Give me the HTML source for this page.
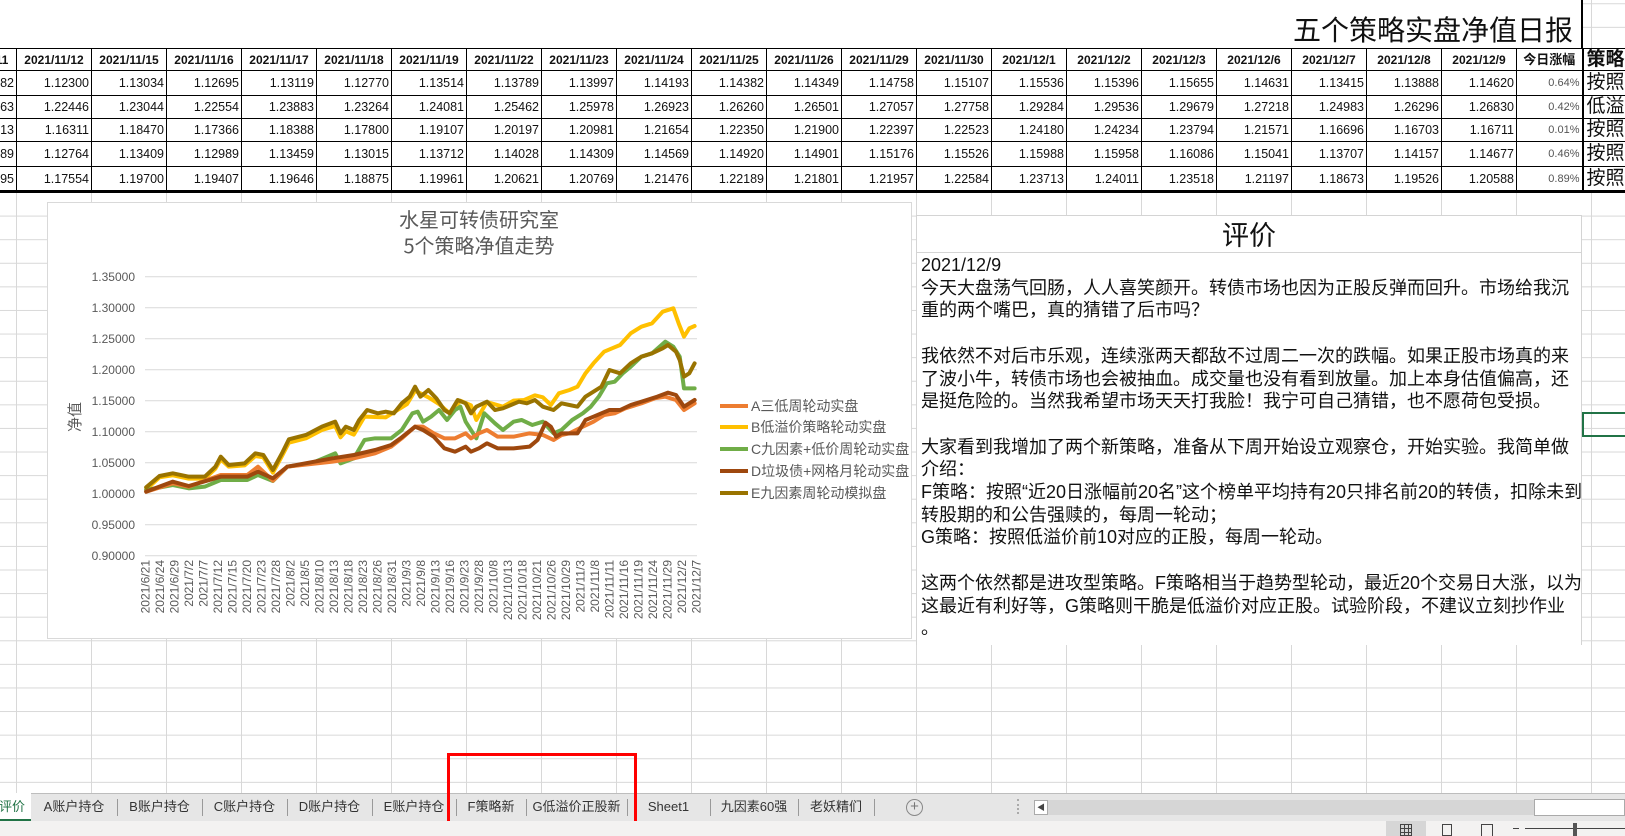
<!DOCTYPE html>
<html><head><meta charset="utf-8">
<style>
*{margin:0;padding:0;box-sizing:border-box}
html,body{width:1625px;height:836px;overflow:hidden;background:#fff;font-family:"Liberation Sans","Noto Sans CJK SC",sans-serif}
#grid{position:absolute;left:0;top:0;width:1625px;height:793px;
background-image:linear-gradient(to right,#d8d8d8 1px,transparent 1px),linear-gradient(to bottom,#d8d8d8 1px,transparent 1px);
background-size:75px 23.6px;background-position:16px 192px}
.abs{position:absolute}
table{border-collapse:collapse;position:absolute;left:-59px;top:48px;table-layout:fixed;width:1701px;background:#fff}
td{border:1px solid #000;font-size:12.5px;line-height:14px;text-align:right;padding:0 2px;white-space:nowrap;overflow:hidden;color:#111;vertical-align:middle}
tr.h td{font-weight:bold;font-size:12px;text-align:center}
td.p{font-size:11px;color:#555}
td.s{font-size:19px;line-height:18px;text-align:left;padding-left:3px;border-left:2px solid #000;color:#111}
.tab{position:absolute;top:793px;height:28px;line-height:27px;font-size:13px;color:#333;text-align:center}
.sep{position:absolute;top:799px;width:1px;height:17px;background:#999}
</style></head><body>
<div id="grid"></div>
<div class="abs" style="left:0;top:0;width:1582px;height:48px;background:#fff"></div>
<div class="abs" style="right:52px;top:12px;font-size:28px;color:#111;font-family:'Noto Sans CJK SC',sans-serif;line-height:34px">五个策略实盘净值日报</div>
<div class="abs" style="left:1581px;top:0;width:2px;height:48px;background:#000"></div>
<table>
<colgroup><col style="width:75px"><col span="20" style="width:75px"><col style="width:66px"><col style="width:60px"></colgroup>
<tr class="h" style="height:22px"><td>2021/11/11</td><td>2021/11/12</td><td>2021/11/15</td><td>2021/11/16</td><td>2021/11/17</td><td>2021/11/18</td><td>2021/11/19</td><td>2021/11/22</td><td>2021/11/23</td><td>2021/11/24</td><td>2021/11/25</td><td>2021/11/26</td><td>2021/11/29</td><td>2021/11/30</td><td>2021/12/1</td><td>2021/12/2</td><td>2021/12/3</td><td>2021/12/6</td><td>2021/12/7</td><td>2021/12/8</td><td>2021/12/9</td><td style="font-size:13px">今日涨幅</td><td class="s" style="font-weight:bold;font-size:19px;text-align:left">策略</td></tr>
<tr style="height:25px"><td>1.12182</td><td>1.12300</td><td>1.13034</td><td>1.12695</td><td>1.13119</td><td>1.12770</td><td>1.13514</td><td>1.13789</td><td>1.13997</td><td>1.14193</td><td>1.14382</td><td>1.14349</td><td>1.14758</td><td>1.15107</td><td>1.15536</td><td>1.15396</td><td>1.15655</td><td>1.14631</td><td>1.13415</td><td>1.13888</td><td>1.14620</td><td class="p">0.64%</td><td class="s">按照"</td></tr>
<tr style="height:23px"><td>1.22063</td><td>1.22446</td><td>1.23044</td><td>1.22554</td><td>1.23883</td><td>1.23264</td><td>1.24081</td><td>1.25462</td><td>1.25978</td><td>1.26923</td><td>1.26260</td><td>1.26501</td><td>1.27057</td><td>1.27758</td><td>1.29284</td><td>1.29536</td><td>1.29679</td><td>1.27218</td><td>1.24983</td><td>1.26296</td><td>1.26830</td><td class="p">0.42%</td><td class="s">低溢"</td></tr>
<tr style="height:23px"><td>1.16213</td><td>1.16311</td><td>1.18470</td><td>1.17366</td><td>1.18388</td><td>1.17800</td><td>1.19107</td><td>1.20197</td><td>1.20981</td><td>1.21654</td><td>1.22350</td><td>1.21900</td><td>1.22397</td><td>1.22523</td><td>1.24180</td><td>1.24234</td><td>1.23794</td><td>1.21571</td><td>1.16696</td><td>1.16703</td><td>1.16711</td><td class="p">0.01%</td><td class="s">按照,</td></tr>
<tr style="height:25px"><td>1.12689</td><td>1.12764</td><td>1.13409</td><td>1.12989</td><td>1.13459</td><td>1.13015</td><td>1.13712</td><td>1.14028</td><td>1.14309</td><td>1.14569</td><td>1.14920</td><td>1.14901</td><td>1.15176</td><td>1.15526</td><td>1.15988</td><td>1.15958</td><td>1.16086</td><td>1.15041</td><td>1.13707</td><td>1.14157</td><td>1.14677</td><td class="p">0.46%</td><td class="s">按照"</td></tr>
<tr style="height:25px;border-bottom:3px solid #000"><td>1.17495</td><td>1.17554</td><td>1.19700</td><td>1.19407</td><td>1.19646</td><td>1.18875</td><td>1.19961</td><td>1.20621</td><td>1.20769</td><td>1.21476</td><td>1.22189</td><td>1.21801</td><td>1.21957</td><td>1.22584</td><td>1.23713</td><td>1.24011</td><td>1.23518</td><td>1.21197</td><td>1.18673</td><td>1.19526</td><td>1.20588</td><td class="p">0.89%</td><td class="s">按照"</td></tr>
</table>

<!-- chart -->
<div class="abs" style="left:47px;top:202px;width:865px;height:437px;background:#fff;border:1px solid #d9d9d9"></div>
<svg class="abs" style="left:0;top:0" width="1625" height="836" font-family="Liberation Sans, Noto Sans CJK SC, sans-serif">
<g stroke="#d9d9d9" stroke-width="1">
<line x1="145" x2="697" y1="276.7" y2="276.7"/><line x1="145" x2="697" y1="307.7" y2="307.7"/><line x1="145" x2="697" y1="338.7" y2="338.7"/><line x1="145" x2="697" y1="369.7" y2="369.7"/><line x1="145" x2="697" y1="400.7" y2="400.7"/><line x1="145" x2="697" y1="431.7" y2="431.7"/><line x1="145" x2="697" y1="462.7" y2="462.7"/><line x1="145" x2="697" y1="493.7" y2="493.7"/><line x1="145" x2="697" y1="524.7" y2="524.7"/><line x1="145" x2="697" y1="555.7" y2="555.7"/>
</g>
<g fill="#595959" font-size="12" text-anchor="end">
<text x="135" y="281">1.35000</text><text x="135" y="312">1.30000</text><text x="135" y="343">1.25000</text><text x="135" y="374">1.20000</text><text x="135" y="405">1.15000</text><text x="135" y="436">1.10000</text><text x="135" y="467">1.05000</text><text x="135" y="498">1.00000</text><text x="135" y="529">0.95000</text><text x="135" y="560">0.90000</text>
</g>
<text x="479" y="227" fill="#595959" font-size="20" text-anchor="middle" font-family="Noto Sans CJK SC, sans-serif">水星可转债研究室</text>
<text x="479" y="253" fill="#595959" font-size="20" text-anchor="middle" font-family="Noto Sans CJK SC, sans-serif">5个策略净值走势</text>
<text transform="translate(80 417) rotate(-90)" fill="#595959" font-size="15" text-anchor="middle" font-family="Noto Sans CJK SC, sans-serif">净值</text>
<g transform="translate(45 200) scale(0.53248 0.33333)" fill="none" stroke-width="4" stroke-linejoin="round" stroke-linecap="round">
<polyline vector-effect="non-scaling-stroke" stroke="#FFC000" points="190,868 215,832 240,826 270,836 300,836 320,806 330,778 345,800 375,796 395,768 410,772 428,818 445,768 458,728 490,715 520,690 545,678 555,712 565,694 580,704 600,650 640,652 680,612 695,572 720,592 740,612 760,640 780,602 800,616 810,660 830,606 860,620 880,602 900,600 920,586 935,592 950,615 965,580 985,570 1000,560 1015,520 1030,490 1050,455 1065,445 1080,435 1100,400 1120,380 1140,370 1160,335 1180,325 1190,370 1200,410 1210,385 1220,378"/>
<polyline vector-effect="non-scaling-stroke" stroke="#70AD47" points="190,870 240,855 270,865 300,860 330,840 380,840 400,825 428,843 455,800 500,790 530,770 545,760 555,790 580,775 600,720 620,715 650,715 670,690 690,640 700,635 710,665 725,650 740,630 755,660 770,630 780,620 790,665 810,715 825,640 845,670 860,690 880,665 895,660 915,675 935,665 955,700 970,690 990,660 1010,640 1025,620 1040,590 1055,550 1070,545 1085,520 1100,500 1120,470 1140,460 1165,425 1180,440 1192,470 1200,565 1210,565 1220,565"/>
<polyline vector-effect="non-scaling-stroke" stroke="#ED7D31" points="190,875 240,850 270,860 330,825 380,825 400,800 428,842 455,800 540,785 580,775 620,760 650,740 670,715 695,680 710,680 730,700 750,715 770,715 790,700 800,715 815,700 830,690 850,710 880,710 910,700 935,705 955,720 970,705 985,700 1010,680 1030,665 1050,645 1070,640 1090,625 1120,610 1145,595 1165,590 1185,600 1200,630 1220,610"/>
<polyline vector-effect="non-scaling-stroke" stroke="#9E480E" points="190,875 240,845 270,858 330,830 380,830 400,815 428,835 455,800 540,775 580,765 620,750 650,735 670,712 695,680 710,690 730,710 750,745 770,755 790,740 800,755 815,745 830,730 850,745 880,745 910,740 925,720 940,668 950,680 960,710 970,700 985,700 1000,700 1015,660 1030,650 1045,640 1060,630 1080,630 1100,615 1130,600 1150,590 1170,578 1185,585 1200,620 1220,600"/>
<polyline vector-effect="non-scaling-stroke" stroke="#997300" points="190,862 215,828 240,820 270,830 300,830 320,800 330,770 345,795 375,790 395,760 410,765 428,810 445,760 458,718 490,705 520,680 545,665 555,700 565,680 580,690 590,660 605,630 625,640 640,635 655,640 670,610 685,590 695,560 705,590 720,570 735,595 750,630 760,640 775,600 790,610 800,640 810,620 830,605 845,630 860,625 875,615 890,605 905,610 920,600 935,620 955,630 970,610 985,615 1000,620 1015,590 1030,575 1045,560 1060,510 1080,520 1100,490 1120,470 1140,460 1160,445 1170,435 1185,455 1192,480 1200,530 1210,520 1220,490"/>
</g>
<g stroke-width="4">
<line x1="720" x2="748" y1="406" y2="406" stroke="#ED7D31"/><line x1="720" x2="748" y1="427" y2="427" stroke="#FFC000"/><line x1="720" x2="748" y1="449" y2="449" stroke="#70AD47"/><line x1="720" x2="748" y1="471" y2="471" stroke="#9E480E"/><line x1="720" x2="748" y1="493" y2="493" stroke="#997300"/>
</g>
<g fill="#595959" font-size="14">
<text x="751" y="411">A三低周轮动实盘</text><text x="751" y="432">B低溢价策略轮动实盘</text><text x="751" y="454">C九因素+低价周轮动实盘</text><text x="751" y="476">D垃圾债+网格月轮动实盘</text><text x="751" y="498">E九因素周轮动模拟盘</text>
</g>
<g fill="#595959" font-size="12" text-anchor="end">
<text transform="translate(149.5 560) rotate(-90)">2021/6/21</text><text transform="translate(164 560) rotate(-90)">2021/6/24</text><text transform="translate(178.5 560) rotate(-90)">2021/6/29</text><text transform="translate(193 560) rotate(-90)">2021/7/2</text><text transform="translate(207.5 560) rotate(-90)">2021/7/7</text><text transform="translate(222 560) rotate(-90)">2021/7/12</text><text transform="translate(236.5 560) rotate(-90)">2021/7/15</text><text transform="translate(251 560) rotate(-90)">2021/7/20</text><text transform="translate(265.5 560) rotate(-90)">2021/7/23</text><text transform="translate(280 560) rotate(-90)">2021/7/28</text><text transform="translate(294.5 560) rotate(-90)">2021/8/2</text><text transform="translate(309 560) rotate(-90)">2021/8/5</text><text transform="translate(323.5 560) rotate(-90)">2021/8/10</text><text transform="translate(338 560) rotate(-90)">2021/8/13</text><text transform="translate(352.5 560) rotate(-90)">2021/8/18</text><text transform="translate(367 560) rotate(-90)">2021/8/23</text><text transform="translate(381.5 560) rotate(-90)">2021/8/26</text><text transform="translate(396 560) rotate(-90)">2021/8/31</text><text transform="translate(410.5 560) rotate(-90)">2021/9/3</text><text transform="translate(425 560) rotate(-90)">2021/9/8</text><text transform="translate(439.5 560) rotate(-90)">2021/9/13</text><text transform="translate(454 560) rotate(-90)">2021/9/16</text><text transform="translate(468.5 560) rotate(-90)">2021/9/23</text><text transform="translate(483 560) rotate(-90)">2021/9/28</text><text transform="translate(497.5 560) rotate(-90)">2021/10/8</text><text transform="translate(512 560) rotate(-90)">2021/10/13</text><text transform="translate(526.5 560) rotate(-90)">2021/10/18</text><text transform="translate(541 560) rotate(-90)">2021/10/21</text><text transform="translate(555.5 560) rotate(-90)">2021/10/26</text><text transform="translate(570 560) rotate(-90)">2021/10/29</text><text transform="translate(584.5 560) rotate(-90)">2021/11/3</text><text transform="translate(599 560) rotate(-90)">2021/11/8</text><text transform="translate(613.5 560) rotate(-90)">2021/11/11</text><text transform="translate(628 560) rotate(-90)">2021/11/16</text><text transform="translate(642.5 560) rotate(-90)">2021/11/19</text><text transform="translate(657 560) rotate(-90)">2021/11/24</text><text transform="translate(671.5 560) rotate(-90)">2021/11/29</text><text transform="translate(686 560) rotate(-90)">2021/12/2</text><text transform="translate(700.5 560) rotate(-90)">2021/12/7</text>
</g>
</svg>
<div class="abs" style="left:48px;top:625px;width:863px;height:13px;background:#fff"></div>

<!-- review panel -->
<div class="abs" style="left:916px;top:215px;width:666px;height:430px;background:#fff;border:1px solid #d4d4d4;border-bottom:none"></div>
<div class="abs" style="left:916px;top:252px;width:666px;height:1px;background:#d4d4d4"></div>
<div class="abs" style="left:916px;top:217px;width:666px;text-align:center;font-size:27px;line-height:34px;color:#111;font-family:'Noto Sans CJK SC',sans-serif">评价</div>
<div class="abs" style="left:921px;top:254px;width:660px;font-size:18px;line-height:22.7px;color:#111;white-space:nowrap;font-family:'Liberation Sans','Noto Sans CJK SC',sans-serif">
2021/12/9<br>今天大盘荡气回肠，人人喜笑颜开。转债市场也因为正股反弹而回升。市场给我沉<br>重的两个嘴巴，真的猜错了后市吗？<br><br>我依然不对后市乐观，连续涨两天都敌不过周二一次的跌幅。如果正股市场真的来<br>了波小牛，转债市场也会被抽血。成交量也没有看到放量。加上本身估值偏高，还<br>是挺危险的。当然我希望市场天天打我脸！我宁可自己猜错，也不愿荷包受损。<br><br>大家看到我增加了两个新策略，准备从下周开始设立观察仓，开始实验。我简单做<br>介绍：<br>F策略：按照“近20日涨幅前20名”这个榜单平均持有20只排名前20的转债，扣除未到<br>转股期的和公告强赎的，每周一轮动；<br>G策略：按照低溢价前10对应的正股，每周一轮动。<br><br>这两个依然都是进攻型策略。F策略相当于趋势型轮动，最近20个交易日大涨，以为<br>这最近有利好等，G策略则干脆是低溢价对应正股。试验阶段，不建议立刻抄作业<br>。
</div>
<div class="abs" style="left:1582px;top:412px;width:43px;height:25px;border:2px solid #217346;border-right:none"></div>

<!-- tab bar -->
<div class="abs" style="left:0;top:793px;width:1625px;height:28px;background:#e6e6e6;border-top:1px solid #bdbdbd"></div>
<div class="abs" style="left:0;top:793px;width:31px;height:28px;background:#fff;border-bottom:2px solid #217346"></div>
<div class="tab" style="left:-8px;width:40px;color:#217346">评价</div>
<div class="tab" style="left:31px;width:86px">A账户持仓</div>
<div class="sep" style="left:117px"></div>
<div class="tab" style="left:117px;width:85px">B账户持仓</div>
<div class="sep" style="left:202px"></div>
<div class="tab" style="left:202px;width:85px">C账户持仓</div>
<div class="sep" style="left:287px"></div>
<div class="tab" style="left:287px;width:85px">D账户持仓</div>
<div class="sep" style="left:372px"></div>
<div class="tab" style="left:372px;width:84px">E账户持仓</div>
<div class="sep" style="left:456px"></div>
<div class="tab" style="left:456px;width:70px">F策略新</div>
<div class="sep" style="left:526px"></div>
<div class="tab" style="left:526px;width:101px">G低溢价正股新</div>
<div class="sep" style="left:627px"></div>
<div class="tab" style="left:627px;width:83px">Sheet1</div>
<div class="sep" style="left:710px"></div>
<div class="tab" style="left:710px;width:88px">九因素60强</div>
<div class="sep" style="left:798px"></div>
<div class="tab" style="left:798px;width:76px">老妖精们</div>
<div class="sep" style="left:874px"></div>
<div class="abs" style="left:906px;top:799px;width:17px;height:17px;border:1px solid #888;border-radius:50%;color:#777;font-size:15px;line-height:14px;text-align:center">+</div>
<div class="abs" style="left:1017px;top:799px;width:2px;height:15px;border-left:2px dotted #aaa"></div>
<div class="abs" style="left:1034px;top:800px;width:500px;height:15px;background:#d6d6d6"></div>
<div class="abs" style="left:1034px;top:800px;width:14px;height:15px;background:#fff;border:1px solid #aaa;font-size:8px;line-height:13px;text-align:center;color:#444">◀</div>
<div class="abs" style="left:1534px;top:799px;width:91px;height:17px;background:#fff;border:1px solid #aaa"></div>
<!-- red box -->
<div class="abs" style="left:447px;top:753px;width:190px;height:76px;border:3px solid #f00"></div>
<!-- status bar -->
<div class="abs" style="left:0;top:821px;width:1625px;height:15px;background:#f3f2f1"></div>
<div class="abs" style="left:1386px;top:821px;width:40px;height:15px;background:#d6d6d6"></div>
<div class="abs" style="left:1400px;top:824px;width:12px;height:12px;border:1px solid #444;background:linear-gradient(to right,transparent 3px,#444 3px,#444 4px,transparent 4px,transparent 7px,#444 7px,#444 8px,transparent 8px),linear-gradient(to bottom,transparent 3px,#444 3px,#444 4px,transparent 4px,transparent 7px,#444 7px,#444 8px,transparent 8px)"></div>
<div class="abs" style="left:1442px;top:824px;width:10px;height:12px;border:1px solid #444"></div>
<div class="abs" style="left:1481px;top:824px;width:12px;height:12px;border:1px solid #444;border-bottom:none"></div>
<div class="abs" style="left:1513px;top:828px;width:6px;height:1px;background:#444"></div>
<div class="abs" style="left:1525px;top:828px;width:100px;height:1px;background:#444"></div>
<div class="abs" style="left:1573px;top:823px;width:4px;height:13px;background:#555"></div>
</body></html>
